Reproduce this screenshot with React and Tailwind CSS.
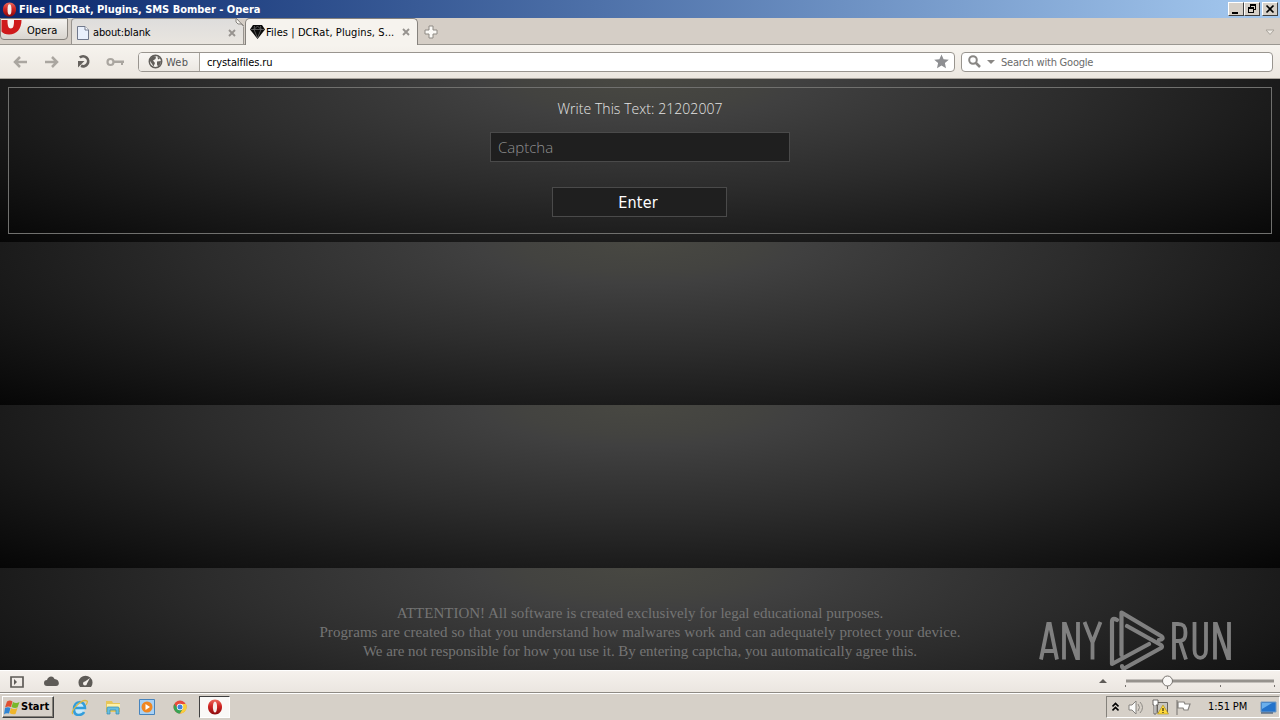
import React from "react";

const UI = "font-['DejaVu_Sans_Condensed','DejaVu_Sans',Tahoma,sans-serif]";
const TILE = "bg-[radial-gradient(ellipse_farthest-corner_at_50%_0%,#484842_0%,#434340_13%,#404040_18%,#2c2c2c_48%,#1a1a1a_72%,#060606_100%)] bg-[length:100%_163px]";

function OperaO({ className }) {
  return (
    <svg className={className} viewBox="0 0 16 16">
      <defs>
        <linearGradient id="opr" x1="0" y1="0" x2="0" y2="1">
          <stop offset="0" stopColor="#ee6a5c" />
          <stop offset=".45" stopColor="#cf2422" />
          <stop offset="1" stopColor="#8c0a0c" />
        </linearGradient>
      </defs>
      <path fillRule="evenodd" fill="url(#opr)" d="M8 .5C3.800.5 1 3.700 1 8s2.800 7.500 7 7.500 7-3.200 7-7.500S12.200.5 8 .5Z" />
      <ellipse cx="8" cy="8" rx="2.100" ry="5.600" fill="#f7eeea" />
    </svg>
  );
}

function CloseX() {
  return (
    <svg className="size-2 shrink-0" viewBox="0 0 8 8">
      <path d="M1 1l6 6M7 1 1 7" stroke="#97938f" strokeWidth="1.9" />
    </svg>
  );
}

function TitleBar() {
  const btn = "flex h-[14px] w-4 items-center justify-center border border-t-white border-l-white border-r-[#404040] border-b-[#404040] bg-[#d6d0c8]";
  return (
    <div className="flex h-[18px] shrink-0 items-center bg-linear-to-r from-[#0b276c] to-[#a6caf0] pr-[2px] pl-[2px]">
      <OperaO className="mr-[2px] size-[15px]" />
      <span className="w-[242px] pt-[2px] text-[11px] leading-4 font-bold tracking-[-0.020px] whitespace-nowrap text-white">Files | DCRat, Plugins, SMS Bomber - Opera</span>
      <div className="ml-auto flex">
        <div className={btn}><svg className="h-3 w-3" viewBox="0 0 12 12"><path d="M2 9h6v2H2z" /></svg></div>
        <div className={btn}>
          <svg className="h-3 w-3" viewBox="0 0 12 12" shapeRendering="crispEdges"><path d="M4 1h6v6H8V6h1V3H5v1H4zM2 4h6v6H2zM3 6v3h4V6z" fillRule="evenodd" /></svg>
        </div>
        <div className={btn + " ml-[2px]"}><svg className="h-3 w-3" viewBox="0 0 12 12"><path d="m2.500 2.500 7 7m0-7-7 7" stroke="#000" strokeWidth="1.700" /></svg></div>
      </div>
    </div>
  );
}

function TabBar() {
  return (
    <div className="flex h-[27px] shrink-0 border-b border-[#9a9791] bg-[#d5cec6] text-[11px] text-black">
      <div className="flex h-[22px] w-[68px] items-start overflow-hidden rounded-b-[4px] border border-[#86827c] bg-linear-to-b from-[#f4f2ef] to-[#d9d5cf]">
        <svg className="mt-[1px] h-[16px] w-[21px] shrink-0" viewBox="0 0 21 16">
          <path d="M.5 0h20c0 9-5 14.500-12.500 14.500-3.500 0-6-1-7.500-3Z" fill="#cf1a1b" />
          <path d="M6.500 0h6.500c0 5.500-.5 8.500-3.200 8.500S6.500 5.500 6.500 0Z" fill="#f8f5f2" />
        </svg>
        <span className="ml-[5px] pt-[1px] leading-[21px]">Opera</span>
      </div>
      <div className="relative ml-[3px] flex h-[26px] w-[173px] items-center rounded-t-[4px] border border-b-0 border-[#98948f] bg-linear-to-b from-[#dedddc] to-[#e9e5df] pt-[2px] pr-[7px] pl-[5px]">
        <svg className="h-[14px] w-3 shrink-0" viewBox="0 0 12 14"><path d="M.5.5H8l3.500 3.500v9.500H.5Z" fill="#e9f0fc" stroke="#71798c" /><path d="M8 .5V4h3.500" fill="#fff" stroke="#71798c" /></svg>
        <span className="ml-[4px] pt-[2px] tracking-[-0.150px]">about:blank</span>
        <div className="ml-auto"><CloseX /></div>
        <svg className="absolute -top-[1px] right-[-1px] size-[9px]" viewBox="0 0 9 9"><path d="M0 0h9v9Z" fill="#d5cec6" /><path d="M1 0v4l2 2h4l1.500 2Z" fill="#f6f4f0" stroke="#85827d" /></svg>
      </div>
      <div className="z-10 ml-[1px] flex h-[27px] w-[173px] items-center rounded-t-[5px] border border-b-0 border-[#86827d] bg-[#f6f3ee] pr-[7px] pl-1">
        <svg className="h-[14px] w-[15px] shrink-0" viewBox="0 0 15 14"><path d="M3 0h9l3 4.500L7.500 14 0 4.500Z" fill="#090909" /><path d="M1 4.500h13M4.500 1 4 4.500 7.500 13 11 4.500 10.500 1M4 4.500 7.500 1 11 4.500" fill="none" stroke="#777" strokeWidth=".7" /></svg>
        <span className="ml-[1px] pt-[2px] whitespace-nowrap tracking-[0.080px]">Files | DCRat, Plugins, S...</span>
        <div className="ml-auto"><CloseX /></div>
      </div>
      <svg className="mt-[7px] ml-[6px] size-[14px]" viewBox="0 0 14 14"><path d="M5 1h4v4h4v4H9v4H5V9H1V5h4Z" fill="#faf9f6" stroke="#8e8a84" /></svg>
      <svg className="mt-[11px] mr-[5px] ml-auto h-[7px] w-[10px]" viewBox="0 0 10 7"><path d="M1 1h8L5 5.500Z" fill="#eeeae4" stroke="#aaa59d" /></svg>
    </div>
  );
}

function AddressBar() {
  return (
    <div className="flex h-[34px] shrink-0 items-center border-b border-[#aaa59e] bg-linear-to-b from-[#f6f3ee] to-[#ece7e0] pr-[7px] pl-[13px] text-[11px]">
      <svg className="h-3 w-[15px]" viewBox="0 0 15 12"><path d="M7 1 2 6l5 5M2.500 6H14" fill="none" stroke="#aaa6a0" strokeWidth="2.500" /></svg>
      <svg className="ml-4 h-3 w-[15px]" viewBox="0 0 15 12"><path d="m8 1 5 5-5 5M12.500 6H1" fill="none" stroke="#aaa6a0" strokeWidth="2.500" /></svg>
      <svg className="ml-[18px] size-[15px]" viewBox="0 0 15 15"><path d="M2.800 3.600A5 5 0 1 1 4 11.800" fill="none" stroke="#65615d" strokeWidth="2.700" /><path d="M1 13.500V7h6.500Z" fill="#65615d" /></svg>
      <svg className="ml-[14px] h-[10px] w-[19px]" viewBox="0 0 19 10"><circle cx="4.500" cy="5" r="3" fill="none" stroke="#aaa6a0" strokeWidth="2.200" /><path d="M8 3.500h10v2.500h-1v2h-2V6H8Z" fill="#aaa6a0" /></svg>
      <div className="ml-[13px] flex h-5 w-[817px] items-center overflow-hidden rounded-[4px] border border-[#99958f] bg-white">
        <div className="flex h-full w-[61px] shrink-0 items-center border-r border-[#aaa69f] bg-linear-to-b from-[#f8f6f3] to-[#ece8e2] pl-[9px] text-[#555]">
          <svg className="size-[15px]" viewBox="0 0 15 15"><circle cx="7.500" cy="7.500" r="6.200" fill="#f4f2ee" stroke="#625f5b" strokeWidth="1.500" /><path d="m2 5 3-3 3 .5-.5 2.500L5 6.500 7 9l-1.500 3.500L4 10 2 7Zm7.500-2.500 2.500 2-2 1Zm-.5 5 4-.5-.5 3-2.500 2.500-1-2Z" fill="#625f5b" /></svg>
          <span className="ml-[3px] pt-[1px] leading-[17px] tracking-[0.200px]">Web</span>
        </div>
        <span className="ml-[7px] pt-[1px] leading-[17px] text-black tracking-[-0.100px]">crystalfiles.ru</span>
        <svg className="mr-[5px] ml-auto size-[15px]" viewBox="0 0 15 15"><path d="m7.500.5 2.100 4.700 5.200.5-3.900 3.400 1.100 5.100-4.500-2.600L3 14.200l1.100-5.100L.2 5.700l5.200-.5Z" fill="#8e8f92" /></svg>
      </div>
      <div className="ml-[6px] flex h-5 w-[312px] items-center rounded-[4px] border border-[#99958f] bg-white pl-[6px]">
        <svg className="size-[13px]" viewBox="0 0 13 13"><circle cx="5" cy="5" r="3.800" fill="none" stroke="#898784" strokeWidth="2" /><path d="m8 8 4 4" stroke="#898784" strokeWidth="2.500" /></svg>
        <svg className="ml-[6px] h-1 w-2" viewBox="0 0 8 4"><path d="M0 0h8L4 4Z" fill="#898784" /></svg>
        <span className="ml-[6px] pt-[1px] leading-[17px] tracking-[-0.220px] text-[#6b6b6b]">Search with Google</span>
      </div>
    </div>
  );
}

function Watermark() {
  return (
    <svg className="absolute top-[530px] left-[1036px] h-[62px] w-[198px]" viewBox="0 0 198 62" fill="none" stroke="#8b8b8b" strokeOpacity=".9">
      <g strokeWidth="3.800">
        <path d="M5 50.500 12.200 15h1.600L21 50.500M8 42h10M28 50.500V15h1l12 34h1V13M48.500 13l8 20.500 8-20.500M56.500 33v17.500" />
        <path d="M138 50.500V15h4c6 0 7.500 3 7.500 8.500 0 6-1.500 8.500-7.500 8.500h-4m6 0 6 18.500M158.500 13v28c0 10.500 11.500 10.500 11.500 0V13M179 50.500V15h1l12 34h1V13" />
      </g>
      <g strokeWidth="4.200" strokeLinecap="round" strokeLinejoin="round">
        <path d="M81 11q-5-3-5 2v42l37-20M85.500 46V3.500L125 27q4 3-2 4M91 17l34 19q2 2 0 3L89 59q-3 1-3-2" />
      </g>
    </svg>
  );
}

function Page() {
  return (
    <main className={"relative h-[591px] shrink-0 overflow-hidden px-2 pt-2 " + TILE}>
      <section className="flex h-[147px] flex-col items-center border border-[#70706e]">
        <p className="mt-[11px] text-[14px] leading-5 font-light tracking-[0.060px] text-[#e4e4e4] font-['Open_Sans','Noto_Sans',sans-serif]">Write This Text: 21202007</p>
        <input placeholder="Captcha" className="mt-[13px] h-[30px] w-[300px] border border-[#4a4a4a] bg-[#1f1f1f] px-[7px] text-[15px] font-light text-white outline-none placeholder:text-[#909090] font-['Open_Sans','Noto_Sans',sans-serif]" />
        <button className="mt-[25px] mr-[1px] h-[30px] w-[175px] border border-[#4a4a4a] bg-[#1f1f1f] pt-[2px] pr-[3px] text-[16px] leading-[26px] tracking-[0.200px] text-white font-['DejaVu_Sans_Condensed',sans-serif]">Enter</button>
      </section>
      <footer className="mt-[370px] text-center font-['Liberation_Serif',serif] text-[15px] leading-[19px] text-[#747474]">
        <p>ATTENTION! All software is created exclusively for legal educational purposes.</p>
        <p className="tracking-[0.080px]">Programs are created so that you understand how malwares work and can adequately protect your device.</p>
        <p className="tracking-[-0.040px]">We are not responsible for how you use it. By entering captcha, you automatically agree this.</p>
      </footer>
      <Watermark />
    </main>
  );
}

function StatusBar() {
  return (
    <div className="flex h-[23px] shrink-0 items-center border-t border-b border-t-white border-b-[#8e8a84] bg-linear-to-b from-[#f5f1ed] to-[#ebe6e0] pr-[5px] pl-[10px]">
      <svg className="h-3 w-[14px]" viewBox="0 0 14 12"><path d="M1 1h12v10H1Z" fill="none" stroke="#5e5b57" strokeWidth="1.700" /><path d="m4 3 3 3-3 3Z" fill="#5e5b57" /></svg>
      <svg className="mb-[2px] ml-5 h-[10px] w-[15px]" viewBox="0 0 15 10"><path d="M3 10a3 3 0 0 1 0-6C4 0 9-1 10.500 3c5 0 6 7 1.500 7Z" fill="#5e5b57" /></svg>
      <svg className="mb-[2px] ml-[19px] h-3 w-[15px]" viewBox="0 0 15 12"><path d="M2 12a7 7 0 1 1 11 0Z" fill="#5e5b57" /><path d="m12 3-3 5.500a2 2 0 1 1-2-2Z" fill="#f2eeea" /></svg>
      <svg className="ml-auto h-[15px] w-[177px]" viewBox="0 0 177 15">
        <path d="m1 9 4-4 4 4Z" fill="#5e5b57" />
        <path d="M28 7h148" stroke="#96928d" strokeWidth="3" />
        <path d="M27.500 11v2m42-2v4m53-4v2m54-2v2" stroke="#77736f" />
        <circle cx="69.500" cy="7" r="5" fill="#faf8f6" stroke="#77736f" />
      </svg>
    </div>
  );
}

function Taskbar() {
  return (
    <div className="flex h-[27px] shrink-0 items-center border-t border-white bg-[#d6d0c8] pl-[2px] text-[11px] text-black">
      <button className="flex h-[22px] w-[52px] items-center border border-t-white border-l-white border-r-[#404040] border-b-[#404040] bg-[#d6d0c8] pl-[1px] shadow-[inset_-1px_-1px_0_#848078]">
        <svg className="h-[15px] w-4 shrink-0" viewBox="0 0 16 15"><path d="M3 1.500q3-2 5.500 0L7 7Q4 6 1 7.500Z" fill="#df5032" /><path d="M9 2q3 2 6.500 0l-2 5.500q-3 1-6-.5Z" fill="#79b829" /><path d="M1 8q3-1.500 5.500 0l-1.500 5.500q-3-1-5 1Z" fill="#3085d4" /><path d="M7 8q3 2 6.500 0l-2 6q-3 1-6-1Z" fill="#f0b62a" /></svg>
        <span className="ml-[1px] pt-[1px] font-bold">Start</span>
      </button>
      <svg className="ml-[17px] size-[17px]" viewBox="0 0 17 17"><circle cx="8" cy="9" r="6" fill="#c6e9fa" /><path d="M4 9h10c0-8-11-8-11 1s9 6 10 3" fill="none" stroke="#329ddb" strokeWidth="2.500" /><path d="M2 15C-2 13 11-1 16 2q1 1-1 4" fill="none" stroke="#dcb843" strokeWidth="1.300" /></svg>
      <svg className="ml-[17px] size-4" viewBox="0 0 16 16"><path d="M1 2h6l1 2h7v9H1Z" fill="#e7c65a" /><path d="M2 5h13v4H2Z" fill="#fff1a7" /><path d="M2 15V9q0-1 1-1h10q1 0 1 1v6h-3v-4H5v4Z" fill="#68bfe0" stroke="#338bb1" strokeWidth=".7" /></svg>
      <svg className="ml-[18px] size-4" viewBox="0 0 16 16"><path d="M.5.500h15v15H.5Z" fill="#a8d1f5" stroke="#4784bd" /><circle cx="8" cy="8" r="5.500" fill="#f08722" /><path d="m6.500 5 4.500 3-4.500 3Z" fill="#fff" /></svg>
      <svg className="ml-[18px] size-[14px]" viewBox="0 0 14 14"><circle cx="7" cy="7" r="6.500" fill="#e84b3c" /><path d="M1.300 4A6.500 6.500 0 0 0 7 13.500l3-5H5Z" fill="#38a354" /><path d="M7 4h6a6.500 6.500 0 0 1-6 9.500l3-5Z" fill="#f8cf3c" /><circle cx="7" cy="7" r="3.200" fill="#fff" /><circle cx="7" cy="7" r="2.500" fill="#3f83db" /></svg>
      <div className="ml-[12px] flex h-[22px] w-[31px] items-center justify-center border border-t-[#404040] border-l-[#404040] border-r-white border-b-white bg-[#faf9f7]"><OperaO className="size-4" /></div>
      <div className="ml-auto flex h-[22px] w-[174px] items-center border border-t-[#84817b] border-l-[#84817b] border-r-white border-b-white pl-[5px]">
        <svg className="h-[10px] w-[7px]" viewBox="0 0 7 10"><path d="m.5 4.500 3-3 3 3m-6 4 3-3 3 3" fill="none" stroke="#000" strokeWidth="1.600" /></svg>
        <svg className="ml-[9px] size-[17px]" viewBox="0 0 17 17"><path d="M1 6h3l4-4v13l-4-4H1Z" fill="#fbfbfa" stroke="#85827e" /><path d="M10 5q3 3.500 0 7m2-9q5 5.500 0 11" fill="none" stroke="#8d8a85" /></svg>
        <svg className="ml-[7px] size-[17px]" viewBox="0 0 17 17"><path d="M5.500 3.500h10v10h-10Z" fill="#c8c6c0" stroke="#66635e" /><path d="M1 1h5v5H4v9H2V6H1Z" fill="#fff" stroke="#4e4c49" strokeWidth=".8" /><path d="m11 6 5.500 9h-11Z" fill="#ffd93b" stroke="#a88912" strokeWidth=".6" /><path d="M11 9v3m0 1v1" stroke="#33280a" strokeWidth="1.200" /></svg>
        <svg className="ml-[6px] size-[17px]" viewBox="0 0 17 17"><path d="M2 1v15M3 3h6l1 2h5l-2 6H9L8 9H3Z" fill="#fff" stroke="#85827e" strokeWidth="1.200" /></svg>
        <span className="ml-4 whitespace-nowrap pt-[1px] tracking-[-0.100px]">1:51 PM</span>
        <svg className="ml-auto mr-[2px] h-[13px] w-[17px]" viewBox="0 0 17 13"><path d="M1 1h15v10H1Z" fill="#2473cb" stroke="#739bc2" /><path d="M2 2h10L2 8Z" fill="#6aafec" /><path d="M1 12h12" stroke="#233e64" /></svg>
      </div>
    </div>
  );
}

export default function App() {
  return (
    <div className={"flex h-[720px] w-[1280px] flex-col overflow-hidden bg-[#d6d0c8] " + UI}>
      <TitleBar />
      <TabBar />
      <AddressBar />
      <Page />
      <StatusBar />
      <Taskbar />
    </div>
  );
}
